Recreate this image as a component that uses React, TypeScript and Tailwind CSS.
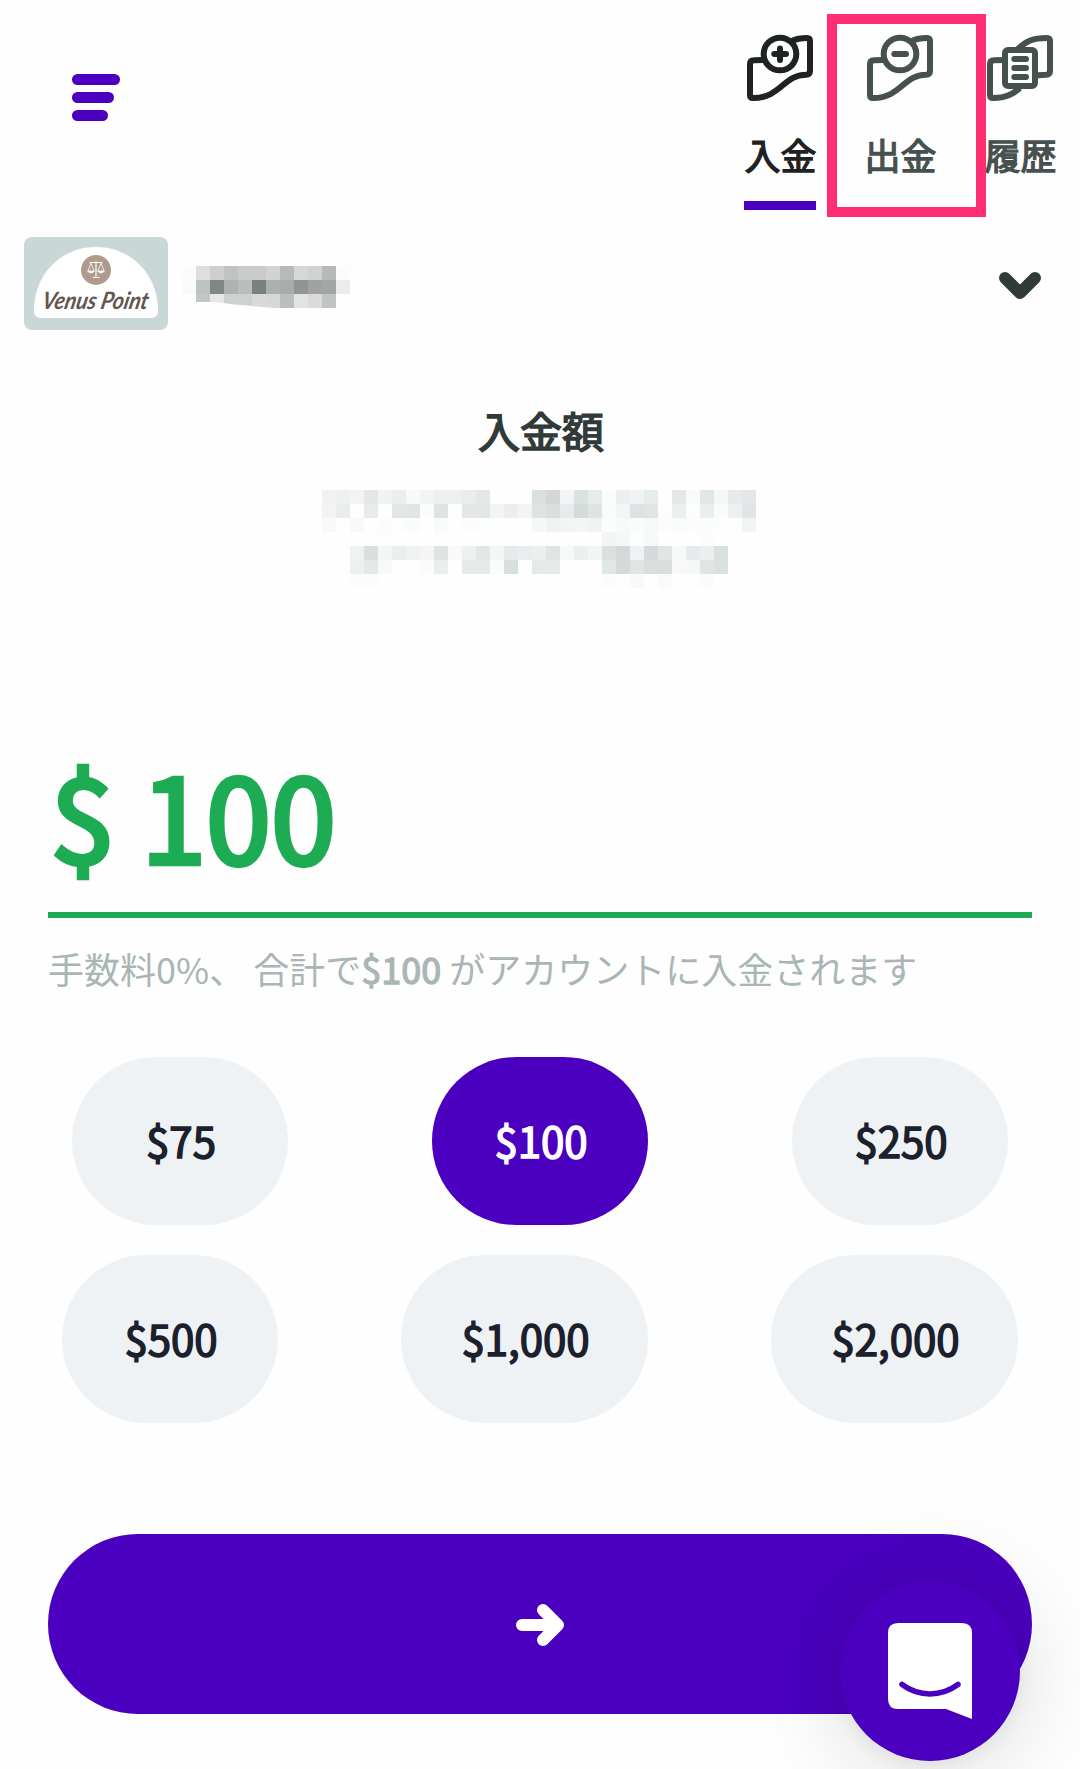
import React from "react";

function Bill({ kind }: { kind: "plus" | "minus" | "list" }) {
  return (
    <svg viewBox="0 0 72 72" className="size-[72px]" fill="none" stroke="currentColor" strokeWidth="6" strokeLinecap="round" strokeLinejoin="round">
      {kind === "list" ? (
        <>
          <path strokeLinecap="butt" d="M21 28C16 28 14 28 10 28.3Q6 28.5 6 32V63Q6 66 9 66C22 66 29 62 36 56M51 43.4C55 43 58 43 62 42.8Q66 42.5 66 39V9Q66 6 63 6C49 6 42 9 34 17" />
          <rect x="21" y="18" width="30" height="36" rx="3" />
          <path d="M30.3 27H42M30.3 36H42M30.3 45H42" />
        </>
      ) : (
        <>
          <path strokeLinecap="butt" d="M19 28C15 28 13 28 10 28.3Q6 28.5 6 32V63Q6 66 9 66C37 66 39 43 62 42.8Q66 42.5 66 39V9Q66 6 63 6C57 6 53 6.5 48 9" />
          <circle cx="36" cy="22" r="16.3" />
          <path d={kind === "plus" ? "M30.3 22H42M36 16.4V28" : "M30.3 22H42"} />
        </>
      )}
    </svg>
  );
}

const ACCOUNT_MASK = [
  "fcfcfc dededf cdcfce c1c3c2 cacccb cacccb d2d3d3 b8bab9 d6d7d6 d1d2d1 b7b9b8 fcfcfc",
  "fafafa bdc2c3 818786 aeb2b3 bbbdbc 798080 abb0b1 a8acab 919594 9fa3a4 a2a6a5 ebeded",
  "fefefe c4c6c5 e5e6e6 cfd1d0 cfd1d0 d8d9d9 d6d7d6 bdbfbe e2e3e2 dadbda c0c4c2 fefefe",
];

const LIMITS_MASK = [
  "f0f2f1 edf1f2 f2f4f3 e3e7e8 f1f3f3 eaeef0 f7faf8 f3f5f4 edf0ee edf0ee e9edee e4e8e8 fefefe fefefe fefefe dae0df d3d8d7 f2f5f3 dae1df e6ebeb fafdfc ebeff0 eff3f5 e6ebeb fefefe e4e8e9 f8fbfa e1e7e4 f4f7f6 e7eaec e3e7e9",
  "f2f4f3 e9edee fdfdfd e7ebec fefefe e2e6e7 e2e5e6 fafdfc dde4e3 fcfffd e3e7e7 e3e7e6 f3f5f4 eaeef0 f3f5f4 dde3e2 d9dfde e7ebed d5dbda dfe3e1 f9fcfb f4f6f6 dde3e2 e0e4e2 fdfdfd eaeff0 fdfdfd e9eef0 f9fcfb eef0ef dfe5e5",
  "f7faf8 fefefe f7faf8 fefefe fcfcfc fdfdfd fafcfb fefefe f9fbfa fefefe fcfcfc fcfefd fefefe fefefe fefefe f6f8f7 f0f2f1 f3f5f4 f4f6f5 f1f3f2 fbfdfc f7faf9 fafcfb f6f9f7 fbfdfc fafcfb fbfdfc fbfcfc fcfdfc fdfdfd f1f4f3",
  "fefefe fefefe fefefe fcfefd fcfdfc fefefe fefefe fefefe fcfdfc fefefe fefefe fefefe fefefe fefefe fefefe fefefe fcfefd fefefe fefefe fefefe f3f5f4 f6f8f7 fbfefd f6f9f7 fefefe fefefe fefefe fbfcfc fefefe fefefe fefefe",
  "fefefe fefefe f0f2f1 d9dfde f4f6f5 eaeef0 f0f2f1 f4f6f5 dde4e3 f7faf8 eff1f0 e2e6e7 f4f6f5 e6eaec e9edee eaeff0 dfe5e4 f7f9f8 ebefef f3f5f4 dae0df d3d9d8 eef2f4 d4dad9 e1e5e6 f7f9f8 e6eaec ebeff0 dae0df fdfdfd fefefe",
  "fefefe fefefe ecf0f1 e4e8e9 f7f9f8 fcfefd fefefe f9fcfb e9eeef fefefe e5e9ea e5e9ea fafcfb d9dfde fefefe e5e9ea e4e9ea fefefe fefefe fefefe e1e6e6 d5dad9 e0e4e2 d8dedd d9dfde f7f9f8 f6f8f7 dfe4e4 dbe1e0 fdfdfd fefefe",
  "fefefe fefefe fcfcfc fcfcfc fefefe fefefe fefefe fefefe fefefe fefefe fefefe fefefe fefefe fefefe fefefe fefefe fdfdfd fefefe fefefe fefefe fbfcfc fcfdfc f9f9f9 fefefe f8fbfa fefefe fcfdfd fbfbfb fefefe fefefe fefefe",
];

function Mosaic({ rows, label }: { rows: string[]; label: string }) {
  return (
    <div role="img" aria-label={label}>
      {rows.map((row, y) => (
        <div key={y} className="flex">
          {row.split(" ").map((c, x) => (
            <span key={x} className="size-[14px]" style={{ backgroundColor: "#" + c }} />
          ))}
        </div>
      ))}
    </div>
  );
}

function Tab({ kind, label, active }: { kind: "plus" | "minus" | "list"; label: string; active?: boolean }) {
  return (
    <button className={"relative flex h-[178px] w-[72px] flex-col items-center " + (active ? "text-[#1f2222]" : "text-[#46514f]")}>
      <Bill kind={kind} />
      <span className="mt-[24px] mb-[2px] ml-[1px] text-[36px] leading-[52px] whitespace-nowrap [-webkit-text-stroke:0.036em_currentColor]">{label}</span>
      {active && <span className="mt-[19px] h-[9px] w-full bg-[#4b00bf]" />}
    </button>
  );
}

function VenusPoint() {
  return (
    <svg viewBox="0 0 144 93" className="h-[93px] w-[144px] rounded-[8px] bg-[#c9d7d6]">
      <path d="M10 74C10 36 38 10 72 10S134 36 134 74Q134 81 127 81H17Q10 81 10 74Z" fill="#fff" />
      <circle cx="72" cy="33" r="15" fill="#b09a8d" />
      <g fill="none" stroke="#fff" strokeWidth="0.8">
        <path d="M65.500 25.500H78.500M72 24.500V40.500M69 40.500H75.500" strokeWidth="1.200" />
        <path d="M67 26L64 34M67 26L70 34M77 26L74 34M77 26L80 34" />
        <path d="M63.500 34H70.500Q67 38 63.500 34ZM73.500 34H80.500Q77 38 73.500 34Z" fill="#fff" />
      </g>
      <text transform="translate(17 71.5) skewX(-12)" fontFamily="Lato, 'Liberation Sans', sans-serif" fontStyle="italic" fontWeight="700" fontSize="24" textLength="106" lengthAdjust="spacingAndGlyphs" fill="#63554f">
        Venus Point
      </text>
    </svg>
  );
}

function Amount({ value, selected, wide }: { value: string; selected?: boolean; wide?: boolean }) {
  return (
    <button
      className={
        "flex h-[168px] items-center justify-center rounded-full pb-[3px] pl-[2px] text-[42px] [-webkit-text-stroke:0.036em_currentColor] " +
        (wide ? "w-[247px] " : "w-[216px] ") +
        (selected ? "bg-[#4b00bf] text-white" : "bg-[#eef2f5] text-[#1b202c]")
      }
    >
      {value}
    </button>
  );
}

export default function App() {
  return (
    <main lang="ja" className="relative flex h-[1769px] w-[1080px] flex-col overflow-hidden bg-[#fefefe] font-['Noto_Sans_CJK_JP',sans-serif]">
      <header className="flex h-[237px] shrink-0 items-start justify-between pr-6 pl-[72px]">
        <button aria-label="メニュー" className="mt-[74px] flex flex-col gap-[7.3px]">
          <span className="h-[10.7px] w-12 rounded-full bg-[#4b00bf]" />
          <span className="h-[10.7px] w-[42px] rounded-full bg-[#4b00bf]" />
          <span className="h-[10.7px] w-9 rounded-full bg-[#4b00bf]" />
        </button>
        <nav className="relative mt-8 flex gap-12">
          <Tab kind="plus" label="入金" active />
          <Tab kind="minus" label="出金" />
          <Tab kind="list" label="履歴" />
          <div className="absolute top-[-18px] left-[83px] h-[203px] w-[159px] border-10 border-[#ff2e72]" />
        </nav>
      </header>

      <section className="flex h-[93px] shrink-0 items-center pr-[39px] pl-6">
        <VenusPoint />
        <div className="mt-[7px] ml-[14px] [clip-path:polygon(0_0,100%_0,100%_100%,55%_100%,30%_91%,20%_86%,0_86%)]">
          <Mosaic rows={ACCOUNT_MASK} label="アカウント" />
        </div>
        <svg viewBox="0 0 42 28" className="mt-[4px] ml-auto h-7 w-[42px]" fill="none" stroke="#303a39" strokeWidth="12" strokeLinecap="round" strokeLinejoin="round">
          <path d="M6 6L21 21L36 6" />
        </svg>
      </section>

      <section className="mt-[70px] flex h-[188px] shrink-0 flex-col items-center">
        <h1 className="-mt-px ml-[2px] h-[91px] text-[42px] font-normal leading-[62px] text-[#303a39] [-webkit-text-stroke:0.036em_currentColor]">入金額</h1>
        <div className="mr-[2px]">
          <Mosaic rows={LIMITS_MASK} label="入金限度額" />
        </div>
      </section>

      <section className="mx-12 mt-[152px] shrink-0">
        <div className="flex h-[178px] items-start border-b-6 border-[#1dac53] pl-[2px] text-[117px] leading-[147px] whitespace-pre text-[#1dac53] [-webkit-text-stroke:0.04em_currentColor]">
          $ 100
        </div>
        <p className="mt-[23px] mb-[2px] text-[36px] leading-[54px] whitespace-pre text-[#a9b6b5]">
          手数料0%、 合計で<b className="font-normal [-webkit-text-stroke:0.036em_currentColor]">$100</b> がアカウントに入金されます
        </p>
      </section>

      <section className="mt-[60px] flex shrink-0 flex-col gap-[30px]">
        <div className="flex justify-between px-[72px]">
          <Amount value="$75" />
          <Amount value="$100" selected />
          <Amount value="$250" />
        </div>
        <div className="flex justify-between px-[62px]">
          <Amount value="$500" />
          <Amount value="$1,000" wide />
          <Amount value="$2,000" wide />
        </div>
      </section>

      <button aria-label="次へ" className="mx-12 mt-[111px] flex h-[180px] shrink-0 items-center justify-center rounded-full bg-[#4b00bf]">
        <svg viewBox="0 0 48 42" className="mt-[2px] h-[42px] w-12" fill="none" stroke="#fff" strokeWidth="12" strokeLinecap="round" strokeLinejoin="round">
          <path d="M6 21H40M27 6L42 21L27 36" />
        </svg>
      </button>

      <button aria-label="チャット" className="absolute top-[1581px] left-[840px] flex size-[180px] items-center justify-center rounded-full bg-[#4b00bf] shadow-[0_3px_18px_rgba(0,0,0,0.06),0_6px_96px_rgba(0,0,0,0.16)]">
        <svg viewBox="0 0 84 96" className="h-24 w-[84px]">
          <path d="M10 0H74Q84 0 84 10V96L58 86H10Q0 86 0 76V10Q0 0 10 0Z" fill="#fff" />
          <path d="M14 61.500C31 74 53 74 70 61.500" fill="none" stroke="#4b00bf" strokeWidth="5.500" strokeLinecap="round" />
        </svg>
      </button>
    </main>
  );
}
